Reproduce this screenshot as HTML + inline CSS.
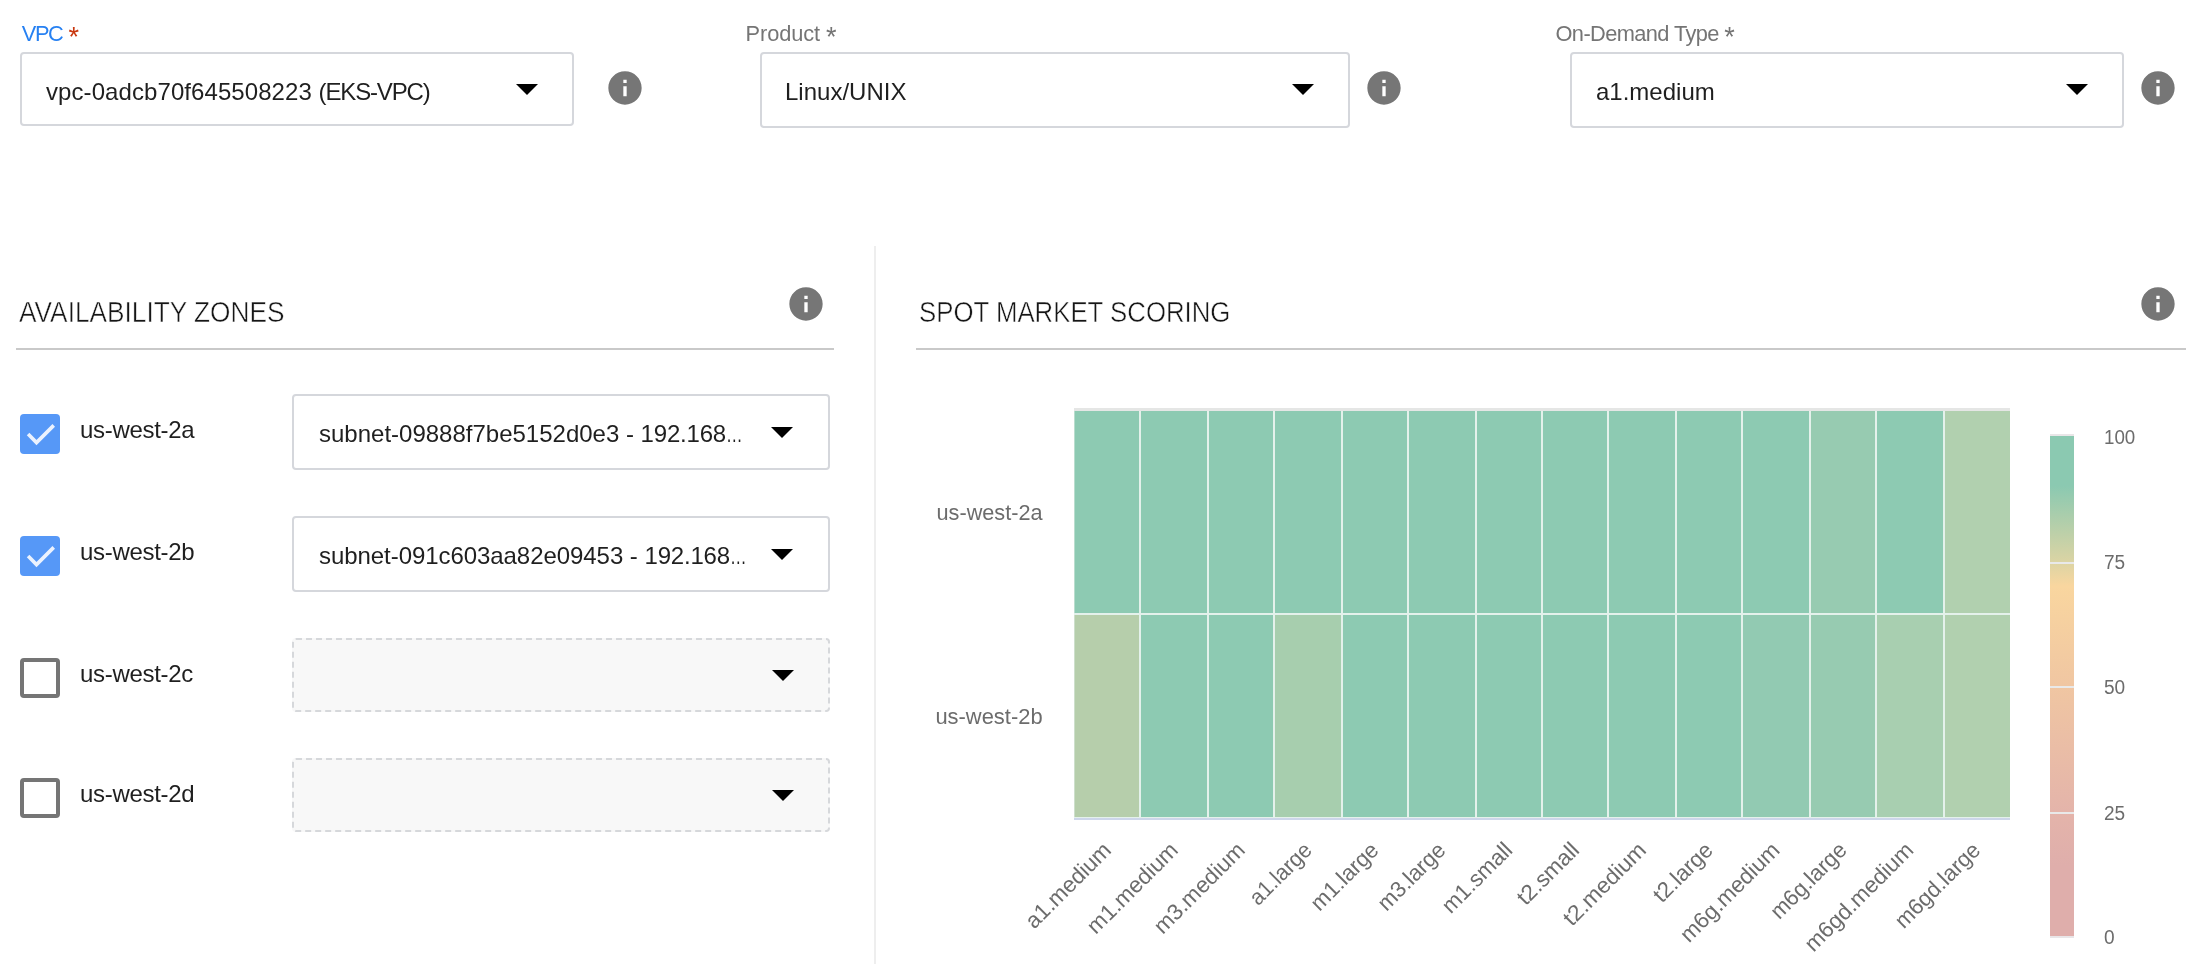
<!DOCTYPE html>
<html lang="en">
<head>
<meta charset="utf-8">
<title>Spot Market Scoring</title>
<style>
  html, body { margin: 0; padding: 0; background: #ffffff; }
  body {
    width: 2196px; height: 964px; position: relative; overflow: hidden;
    font-family: "Liberation Sans", sans-serif; color: #212121;
  }
  #app { position: absolute; left: 0; top: 0; width: 2196px; height: 964px; will-change: transform; transform: translateZ(0); }
  .abs { position: absolute; }
  .field-label {
    position: absolute; font-size: 21.8px; line-height: 24px; height: 24px;
    color: #757575; white-space: nowrap;
  }
  .field-label.focused { color: #2781f2; }
  .field-label .req-red { color: #c9370f; }
  .field-label .ast { font-size: 27px; line-height: 0; position: relative; top: 4.7px; letter-spacing: 0; }
  .select-box {
    position: absolute; box-sizing: border-box;
    border: 2px solid #d5d7dc; border-radius: 4px; background: #ffffff;
  }
  .select-box.disabled { border: 2px dashed #d6d8db; background: #f8f8f8; }
  .select-value {
    position: absolute; left: 24px; font-size: 24px; line-height: 28px; height: 28px;
    color: #1f1f1f; white-space: nowrap;
  }
  .ellip { display: inline-block; width: 16px; transform: scaleX(0.69); transform-origin: 0 50%; }
  .select-arrow { position: absolute; width: 22px; height: 11px; display: block; }
  .info-icon { position: absolute; width: 40px; height: 40px; display: block; }
  .section-title {
    position: absolute; font-size: 28.8px; line-height: 32px; height: 32px;
    color: #161616; white-space: nowrap; font-weight: 400; transform-origin: 0 50%; -webkit-text-stroke: 0.5px #ffffff;
    margin: 0;
  }
  .rule { position: absolute; height: 2px; background: #c9c9c9; }
  .vdivider { position: absolute; left: 874px; top: 246px; width: 2px; height: 718px; background: #eeeeee; }
  .checkbox {
    position: absolute; left: 20px; width: 40px; height: 40px; box-sizing: border-box;
    border-radius: 4px;
  }
  .checkbox.checked { background: #5698f7; }
  .checkbox.unchecked { border: 4px solid #757575; background: #ffffff; }
  .checkbox svg { display: block; width: 40px; height: 40px; }
  .zone-label {
    position: absolute; left: 80px; letter-spacing: -0.3px; font-size: 24px; line-height: 28px; height: 28px;
    color: #1f1f1f; white-space: nowrap;
  }
  svg text { font-family: "Liberation Sans", sans-serif; }
</style>
</head>
<body>
<div id="app">

<!-- ===== Top row: selects ===== -->
<div class="field-label focused" style="left:21.7px; top:22.3px;"><span style="letter-spacing:-1.35px;">VPC</span> <span class="ast req-red">*</span></div>
<div class="select-box" style="left:20px; top:52px; width:554px; height:74px;">
  <div class="select-value" style="top:24px;"><span style="letter-spacing:0.08px;">vpc-0adcb70f645508223</span> <span style="letter-spacing:-1.15px;">(EKS-VPC)</span></div>
  <svg class="select-arrow" style="left:494px; top:30px;" viewBox="0 0 22 11"><polygon points="0,0 22,0 11,11" fill="#000"/></svg>
</div>
<svg class="info-icon" style="left:604.5px; top:68px;" viewBox="0 0 24 24"><path fill="#767676" d="M12 2C6.48 2 2 6.48 2 12s4.48 10 10 10 10-4.48 10-10S17.52 2 12 2zm1 15h-2v-6h2v6zm0-8h-2V7h2v2z"/></svg>

<div class="field-label" style="left:745.5px; top:22.3px; letter-spacing:-0.08px;">Product <span class="ast">*</span></div>
<div class="select-box" style="left:760px; top:52px; width:590px; height:76px;">
  <div class="select-value" style="top:24px; left:23px;">Linux/UNIX</div>
  <svg class="select-arrow" style="left:530px; top:30px;" viewBox="0 0 22 11"><polygon points="0,0 22,0 11,11" fill="#000"/></svg>
</div>
<svg class="info-icon" style="left:1364px; top:68px;" viewBox="0 0 24 24"><path fill="#767676" d="M12 2C6.48 2 2 6.48 2 12s4.48 10 10 10 10-4.48 10-10S17.52 2 12 2zm1 15h-2v-6h2v6zm0-8h-2V7h2v2z"/></svg>

<div class="field-label" style="left:1555.5px; top:22.3px; letter-spacing:-0.6px;">On-Demand Type <span class="ast">*</span></div>
<div class="select-box" style="left:1570px; top:52px; width:554px; height:76px;">
  <div class="select-value" style="top:24px; left:24px;">a1.medium</div>
  <svg class="select-arrow" style="left:494px; top:30px;" viewBox="0 0 22 11"><polygon points="0,0 22,0 11,11" fill="#000"/></svg>
</div>
<svg class="info-icon" style="left:2138px; top:68px;" viewBox="0 0 24 24"><path fill="#767676" d="M12 2C6.48 2 2 6.48 2 12s4.48 10 10 10 10-4.48 10-10S17.52 2 12 2zm1 15h-2v-6h2v6zm0-8h-2V7h2v2z"/></svg>

<!-- ===== Left panel: availability zones ===== -->
<h2 class="section-title" style="left:19.2px; top:296px; transform:scaleX(0.9115);">AVAILABILITY ZONES</h2>
<svg class="info-icon" style="left:786px; top:284px;" viewBox="0 0 24 24"><path fill="#767676" d="M12 2C6.48 2 2 6.48 2 12s4.48 10 10 10 10-4.48 10-10S17.52 2 12 2zm1 15h-2v-6h2v6zm0-8h-2V7h2v2z"/></svg>
<div class="rule" style="left:16px; top:348px; width:818px;"></div>

<div class="checkbox checked" style="top:414px;"><svg viewBox="0 0 40 40"><path d="M8.1 20 16.5 28.6 33.74 11.39" fill="none" stroke="#ebf2fe" stroke-width="3.6"/></svg></div>
<div class="zone-label" style="top:416px;">us-west-2a</div>
<div class="select-box" style="left:292px; top:394px; width:538px; height:76px;">
  <div class="select-value" style="top:24px; left:25px;">subnet-09888f7be5152d0e3 - <span style="letter-spacing:-0.2px;">192.168</span><span class="ellip">…</span></div>
  <svg class="select-arrow" style="left:477px; top:31px;" viewBox="0 0 22 11"><polygon points="0,0 22,0 11,11" fill="#000"/></svg>
</div>

<div class="checkbox checked" style="top:536px;"><svg viewBox="0 0 40 40"><path d="M8.1 20 16.5 28.6 33.74 11.39" fill="none" stroke="#ebf2fe" stroke-width="3.6"/></svg></div>
<div class="zone-label" style="top:538px;">us-west-2b</div>
<div class="select-box" style="left:292px; top:516px; width:538px; height:76px;">
  <div class="select-value" style="top:24px; left:25px;"><span style="letter-spacing:-0.06px;">subnet-091c603aa82e09453</span> - <span style="letter-spacing:-0.2px;">192.168</span><span class="ellip">…</span></div>
  <svg class="select-arrow" style="left:477px; top:31px;" viewBox="0 0 22 11"><polygon points="0,0 22,0 11,11" fill="#000"/></svg>
</div>

<div class="checkbox unchecked" style="top:658px;"></div>
<div class="zone-label" style="top:660px;">us-west-2c</div>
<div class="select-box disabled" style="left:292px; top:638px; width:538px; height:74px;">
  <svg class="select-arrow" style="left:478px; top:30px;" viewBox="0 0 22 11"><polygon points="0,0 22,0 11,11" fill="#000"/></svg>
</div>

<div class="checkbox unchecked" style="top:778px;"></div>
<div class="zone-label" style="top:780px;">us-west-2d</div>
<div class="select-box disabled" style="left:292px; top:758px; width:538px; height:74px;">
  <svg class="select-arrow" style="left:478px; top:30px;" viewBox="0 0 22 11"><polygon points="0,0 22,0 11,11" fill="#000"/></svg>
</div>

<div class="vdivider"></div>

<!-- ===== Right panel: spot market scoring ===== -->
<h2 class="section-title" style="left:919px; top:296px; transform:scaleX(0.8955);">SPOT MARKET SCORING</h2>
<svg class="info-icon" style="left:2138px; top:284px;" viewBox="0 0 24 24"><path fill="#767676" d="M12 2C6.48 2 2 6.48 2 12s4.48 10 10 10 10-4.48 10-10S17.52 2 12 2zm1 15h-2v-6h2v6zm0-8h-2V7h2v2z"/></svg>
<div class="rule" style="left:916px; top:348px; width:1270px;"></div>

<!--CHART-->
<svg class="abs" style="left:900px; top:380px;" width="1296" height="584" viewBox="900 380 1296 584" role="img" aria-label="Spot market scoring heatmap">
<defs><linearGradient id="cbar" x1="0" y1="0" x2="0" y2="1"><stop offset="0" stop-color="#8bc9b1"/><stop offset="0.10" stop-color="#8bc9b1"/><stop offset="0.25" stop-color="#dad4a4"/><stop offset="0.30" stop-color="#f9d69f"/><stop offset="0.50" stop-color="#f0c6a2"/><stop offset="0.75" stop-color="#e4b4aa"/><stop offset="0.86" stop-color="#dfaeab"/><stop offset="1" stop-color="#dfaeab"/></linearGradient></defs>
<rect x="1074" y="410" width="936" height="408" fill="#e4f1eb"/>
<rect x="1074.5" y="411" width="64.5" height="202" fill="#8dcab2"/>
<rect x="1141.0" y="411" width="66.0" height="202" fill="#8dcab2"/>
<rect x="1209.0" y="411" width="64.0" height="202" fill="#8dcab2"/>
<rect x="1275.0" y="411" width="66.0" height="202" fill="#8dcab2"/>
<rect x="1343.0" y="411" width="64.0" height="202" fill="#8dcab2"/>
<rect x="1409.0" y="411" width="66.0" height="202" fill="#8dcab2"/>
<rect x="1477.0" y="411" width="64.0" height="202" fill="#8dcab2"/>
<rect x="1543.0" y="411" width="64.0" height="202" fill="#8dcab2"/>
<rect x="1609.0" y="411" width="66.0" height="202" fill="#8dcab2"/>
<rect x="1677.0" y="411" width="64.0" height="202" fill="#8dcab2"/>
<rect x="1743.0" y="411" width="66.0" height="202" fill="#8dcab2"/>
<rect x="1811.0" y="411" width="64.0" height="202" fill="#97cbb1"/>
<rect x="1877.0" y="411" width="66.0" height="202" fill="#8dcab2"/>
<rect x="1945.0" y="411" width="65.0" height="202" fill="#b1d0af"/>
<rect x="1074.5" y="615" width="64.5" height="202" fill="#b6ceab"/>
<rect x="1141.0" y="615" width="66.0" height="202" fill="#8dcab2"/>
<rect x="1209.0" y="615" width="64.0" height="202" fill="#8dcab2"/>
<rect x="1275.0" y="615" width="66.0" height="202" fill="#a7ceae"/>
<rect x="1343.0" y="615" width="64.0" height="202" fill="#8dcab2"/>
<rect x="1409.0" y="615" width="66.0" height="202" fill="#8dcab2"/>
<rect x="1477.0" y="615" width="64.0" height="202" fill="#8dcab2"/>
<rect x="1543.0" y="615" width="64.0" height="202" fill="#8dcab2"/>
<rect x="1609.0" y="615" width="66.0" height="202" fill="#8dcab2"/>
<rect x="1677.0" y="615" width="64.0" height="202" fill="#8dcab2"/>
<rect x="1743.0" y="615" width="66.0" height="202" fill="#92cab2"/>
<rect x="1811.0" y="615" width="64.0" height="202" fill="#97cbb1"/>
<rect x="1877.0" y="615" width="66.0" height="202" fill="#a8cfb0"/>
<rect x="1945.0" y="615" width="65.0" height="202" fill="#b1d0af"/>
<rect x="1074" y="408" width="936" height="3" fill="#e5e6e5"/>
<rect x="1074" y="818" width="936" height="2" fill="#cdd6ea"/>
<text x="1042.6" y="519.8" text-anchor="end" font-size="22.4" fill="#6c6c6c" textLength="106.1" lengthAdjust="spacingAndGlyphs">us-west-2a</text>
<text x="1042.6" y="723.8" text-anchor="end" font-size="22.4" fill="#6c6c6c" textLength="107.2" lengthAdjust="spacingAndGlyphs">us-west-2b</text>
<text transform="translate(1112.5,851.5) rotate(-45)" text-anchor="end" font-size="22.4" fill="#6c6c6c" textLength="110.6" lengthAdjust="spacingAndGlyphs">a1.medium</text>
<text transform="translate(1179.4,851.5) rotate(-45)" text-anchor="end" font-size="22.4" fill="#6c6c6c" textLength="118.2" lengthAdjust="spacingAndGlyphs">m1.medium</text>
<text transform="translate(1246.2,851.5) rotate(-45)" text-anchor="end" font-size="22.4" fill="#6c6c6c" textLength="118.2" lengthAdjust="spacingAndGlyphs">m3.medium</text>
<text transform="translate(1313.1,851.5) rotate(-45)" text-anchor="end" font-size="22.4" fill="#6c6c6c" textLength="77.7" lengthAdjust="spacingAndGlyphs">a1.large</text>
<text transform="translate(1380.0,851.5) rotate(-45)" text-anchor="end" font-size="22.4" fill="#6c6c6c" textLength="85.4" lengthAdjust="spacingAndGlyphs">m1.large</text>
<text transform="translate(1446.8,851.5) rotate(-45)" text-anchor="end" font-size="22.4" fill="#6c6c6c" textLength="85.4" lengthAdjust="spacingAndGlyphs">m3.large</text>
<text transform="translate(1513.7,851.5) rotate(-45)" text-anchor="end" font-size="22.4" fill="#6c6c6c" textLength="89.1" lengthAdjust="spacingAndGlyphs">m1.small</text>
<text transform="translate(1580.5,851.5) rotate(-45)" text-anchor="end" font-size="22.4" fill="#6c6c6c" textLength="77.5" lengthAdjust="spacingAndGlyphs">t2.small</text>
<text transform="translate(1647.4,851.5) rotate(-45)" text-anchor="end" font-size="22.4" fill="#6c6c6c" textLength="106.7" lengthAdjust="spacingAndGlyphs">t2.medium</text>
<text transform="translate(1714.2,851.5) rotate(-45)" text-anchor="end" font-size="22.4" fill="#6c6c6c" textLength="73.8" lengthAdjust="spacingAndGlyphs">t2.large</text>
<text transform="translate(1781.1,851.5) rotate(-45)" text-anchor="end" font-size="22.4" fill="#6c6c6c" textLength="130.1" lengthAdjust="spacingAndGlyphs">m6g.medium</text>
<text transform="translate(1848.0,851.5) rotate(-45)" text-anchor="end" font-size="22.4" fill="#6c6c6c" textLength="97.3" lengthAdjust="spacingAndGlyphs">m6g.large</text>
<text transform="translate(1914.8,851.5) rotate(-45)" text-anchor="end" font-size="22.4" fill="#6c6c6c" textLength="143.2" lengthAdjust="spacingAndGlyphs">m6gd.medium</text>
<text transform="translate(1981.7,851.5) rotate(-45)" text-anchor="end" font-size="22.4" fill="#6c6c6c" textLength="110.4" lengthAdjust="spacingAndGlyphs">m6gd.large</text>
<rect x="2050" y="434" width="24" height="504" fill="#e9e6e8"/>
<rect x="2050" y="436" width="24" height="500" fill="url(#cbar)"/>
<rect x="2050" y="562" width="24" height="2" fill="#e9e9e9"/>
<rect x="2050" y="686" width="24" height="2" fill="#e9e9e9"/>
<rect x="2050" y="812" width="24" height="2" fill="#e9e9e9"/>
<text x="2104" y="444" font-size="20" fill="#6c6c6c" textLength="31.3" lengthAdjust="spacingAndGlyphs">100</text>
<text x="2104" y="569.4" font-size="20" fill="#6c6c6c" textLength="21.2" lengthAdjust="spacingAndGlyphs">75</text>
<text x="2104" y="694" font-size="20" fill="#6c6c6c" textLength="21.2" lengthAdjust="spacingAndGlyphs">50</text>
<text x="2104" y="820" font-size="20" fill="#6c6c6c" textLength="21.2" lengthAdjust="spacingAndGlyphs">25</text>
<text x="2104" y="943.8" font-size="20" fill="#6c6c6c" textLength="10.6" lengthAdjust="spacingAndGlyphs">0</text>
</svg>
<!--/CHART-->

</div>
</body>
</html>
